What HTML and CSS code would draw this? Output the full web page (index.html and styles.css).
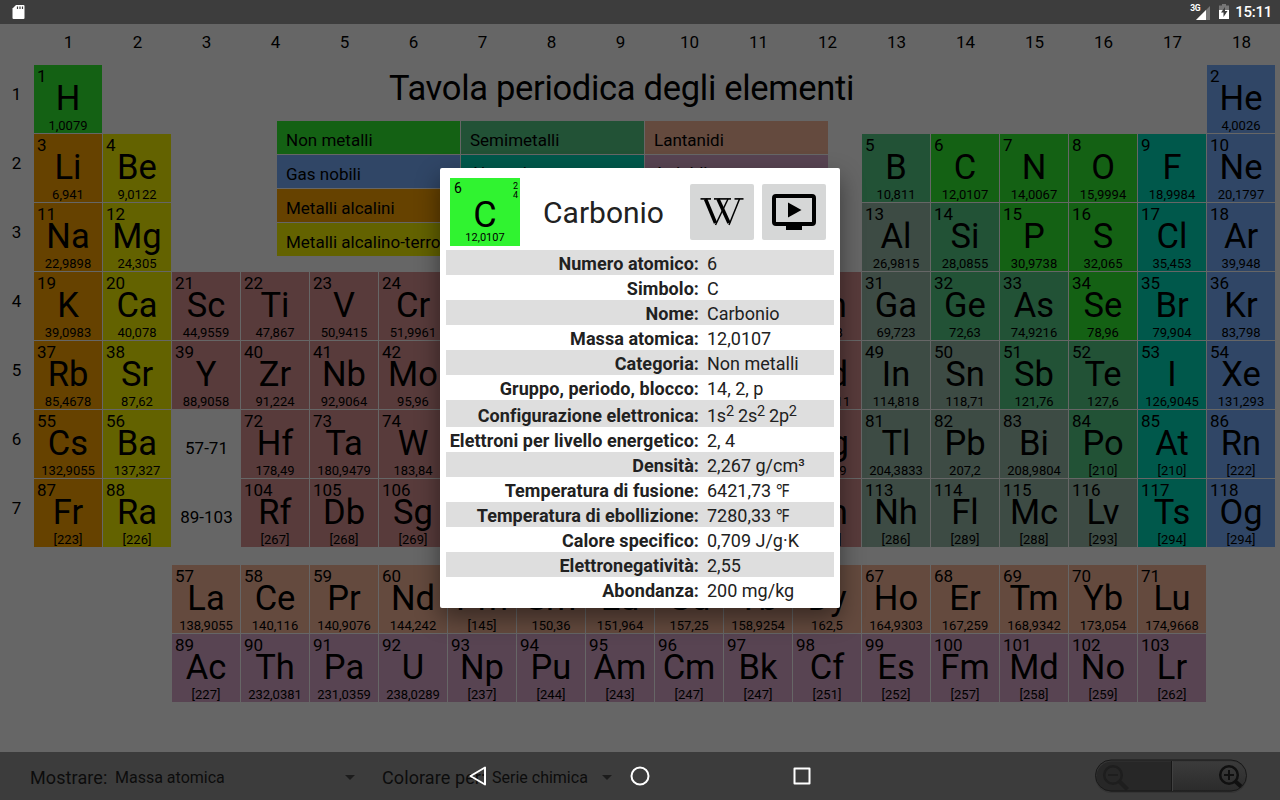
FILE: index.html
```html
<!DOCTYPE html>
<html lang="it">
<head>
<meta charset="utf-8">
<title>Tavola periodica degli elementi</title>
<link rel="stylesheet" href="styles.css">
</head>
<body>
<main class="app">
  <div class="table" id="table">
    <section class="intro">
      <h1 class="title">Tavola periodica degli elementi</h1>
      <div class="legend">
        <div class="nonmetal">Non metalli</div><div class="metalloid">Semimetalli</div><div class="lanthanide">Lantanidi</div>
        <div class="noble">Gas nobili</div><div class="halogen">Alogeni</div><div class="actinide">Attinidi</div>
        <div class="alkali">Metalli alcalini</div><div class="transition">Transizione</div><div></div>
        <div class="alkaline">Metalli alcalino-terrosi</div><div class="post">Post-transizione</div><div></div>
      </div>
    </section>
  </div>
</main>
<div class="scrim"></div>
<header class="status">
  <svg class="sd" width="14" height="16" viewBox="0 0 14 16"><path d="M4 1h7.500q1 0 1 1v12q0 1-1 1h-10q-1 0-1-1V4.500z" fill="#fff"/><path d="M5.500 2.500v2.500M8 2.500v2.500M10.500 2.500v2.500" stroke="#3d3d3d" stroke-width="1.200"/></svg>
  <span class="net">3G</span>
  <svg class="signal" width="14" height="14" viewBox="0 0 14 14"><path d="M14 0v14H0z" fill="#777"/><path d="M10 4v10H0z" fill="#fff"/></svg>
  <svg class="battery" width="10" height="15" viewBox="0 0 10 15"><path d="M3 0h4v1.500h3V15H0V1.500h3z" fill="#777"/><path d="M0 6h10v9H0z" fill="#fff"/><path d="M6 3L2 8.500h2.500V13L8.500 7H6z" fill="#3d3d3d"/></svg>
  <span class="clock">15:11</span>
</header>
<footer class="bar">
  <span class="label">Mostrare:</span><span class="choice first">Massa atomica</span><i class="caret"></i>
  <span class="label second">Colorare per:</span><span class="choice series">Serie chimica</span><i class="caret"></i>
  <svg class="zoom" width="160" height="42" viewBox="0 0 160 42">
    <defs><linearGradient id="plus" x2="0" y2="1"><stop stop-color="#3b3b3b"/><stop offset="1" stop-color="#2b2b2b"/></linearGradient></defs>
    <rect x="4" y="5" width="152" height="33" rx="16.500" fill="#343434"/>
    <path d="M81 6.500H20.500a15 15 0 0 0 0 30H81z" fill="#272727"/>
    <path d="M81 6.500h59a15 15 0 0 1 0 30H81z" fill="url(#plus)"/>
    <rect x="4.500" y="5" width="151" height="31" rx="15.500" fill="none" stroke="#191919"/>
    <path d="M80.500 6v30" stroke="#171717"/><path d="M81.500 6v30" stroke="#404040"/>
    <g fill="none" stroke="#1e1e1e"><circle cx="22" cy="20" r="8.800" stroke-width="2.500"/><path d="M17 20h10" stroke-width="2"/><path d="M28.500 26.500l8 8" stroke-width="4"/></g>
    <g fill="none" stroke="#101010"><circle cx="138" cy="20" r="8.800" stroke-width="2.500"/><path d="M133 20h10M138 15v10" stroke-width="2"/><path d="M144.500 26.500l5.500 5" stroke-width="4"/></g>
  </svg>
</footer>
<nav class="system">
  <svg width="20" height="20" viewBox="0 0 20 20"><path d="M17 1.500v17L2.500 10z"/></svg>
  <svg width="20" height="20" viewBox="0 0 20 20"><circle cx="10" cy="10" r="8.500"/></svg>
  <svg width="20" height="20" viewBox="0 0 20 20"><rect x="2.500" y="2.500" width="15" height="15"/></svg>
</nav>
<section class="dialog">
  <div class="head">
    <div class="card"><span class="no">6</span><span class="shells">2<br>4</span><span class="big">C</span><span class="weight">12,0107</span></div>
    <h2 class="name">Carbonio</h2>
    <div class="button">
      <svg width="44" height="28" viewBox="0 0 44 28" stroke="#000">
        <g stroke-width="3.500"><line x1="5.500" y1="1" x2="15.500" y2="25"/><line x1="18" y1="1" x2="29" y2="25"/></g>
        <g stroke-width="1.500"><line x1="15.500" y1="27" x2="28" y2="1"/><line x1="29" y1="27" x2="39.500" y2="1"/></g>
        <g stroke-width="1.600"><line x1="0.500" y1="0.900" x2="11" y2="0.900"/><line x1="14" y1="0.900" x2="31" y2="0.900"/><line x1="34.500" y1="0.900" x2="43.500" y2="0.900"/></g>
      </svg>
    </div>
    <div class="button"><svg width="44" height="36" viewBox="0 0 44 36"><rect x="2" y="2" width="40" height="28" rx="2" fill="none" stroke="#000" stroke-width="4"/><path d="M14 31h16v5H14z"/><path d="M16 8.500v15L29.500 16z"/></svg></div>
  </div>
  <dl class="facts">
    <div><dt>Numero atomico:</dt><dd>6</dd></div>
    <div><dt>Simbolo:</dt><dd>C</dd></div>
    <div><dt>Nome:</dt><dd>Carbonio</dd></div>
    <div><dt>Massa atomica:</dt><dd>12,0107</dd></div>
    <div><dt>Categoria:</dt><dd>Non metalli</dd></div>
    <div><dt>Gruppo, periodo, blocco:</dt><dd>14, 2, p</dd></div>
    <div class="config"><dt>Configurazione elettronica:</dt><dd>1s<sup>2</sup> 2s<sup>2</sup> 2p<sup>2</sup></dd></div>
    <div><dt>Elettroni per livello energetico:</dt><dd>2, 4</dd></div>
    <div><dt>Densità:</dt><dd>2,267 g/cm³</dd></div>
    <div><dt>Temperatura di fusione:</dt><dd>6421,73 <span class="unit">℉</span></dd></div>
    <div><dt>Temperatura di ebollizione:</dt><dd>7280,33 <span class="unit">℉</span></dd></div>
    <div><dt>Calore specifico:</dt><dd>0,709 J/g·K</dd></div>
    <div><dt>Elettronegatività:</dt><dd>2,55</dd></div>
    <div><dt>Abondanza:</dt><dd>200 mg/kg</dd></div>
  </dl>
</section>
<script src="app.js"></script>
</body>
</html>
```
FILE: styles.css
```css
* { box-sizing: border-box; }
body { margin: 0; width: 1280px; height: 800px; overflow: hidden; background: #fff; color: #000; font-family: Roboto, "Noto Sans", sans-serif; }
h1, h2, dl, dd { margin: 0; font-weight: 400; }
.app { height: 800px; padding-top: 24px; }
.table { display: grid; grid-template-columns: 33px repeat(18, 68px); grid-template-rows: 40px repeat(7, 68px) 16px repeat(2, 68px); gap: 1px; }
.group, .period, .range { display: flex; align-items: center; justify-content: center; font-size: 17px; }
.group { padding: 0 0 5px 1px; }
.period { padding-bottom: 11px; }
.range { padding: 7px 0 0 1px; }
.cell { display: grid; grid-template-rows: 18px 26px 22px; padding: 2px 0 0 3px; height: 68px; white-space: nowrap; }
.cell .number { font-size: 17px; line-height: 18px; }
.cell .symbol { margin-left: -3px; text-align: center; font-size: 34.5px; line-height: 26px; }
.cell .mass { margin-left: -3px; text-align: center; font-size: 13px; line-height: 30px; }
.intro { grid-column: 5 / 14; grid-row: 2 / 5; padding-left: 36px; }
.title { height: 56px; padding-left: 112px; font-size: 34.500px; letter-spacing: -.3px; line-height: 46px; white-space: nowrap; }
.legend { display: grid; grid-template-columns: repeat(3, 183px); grid-auto-rows: 33px; gap: 1px; font-size: 17px; line-height: 38px; white-space: nowrap; }
.legend div { padding-left: 9px; }
.legend .halogen, .legend .actinide { line-height: 36px; }
.nonmetal { background: #32f332; }
.noble { background: #78b0ff; }
.alkali { background: #ffa500; }
.alkaline { background: #f8f500; }
.transition { background: #dd9494; }
.post { background: #99bbaa; }
.metalloid { background: #55cc88; }
.halogen { background: #00ddbb; }
.lanthanide { background: #fbb89c; }
.actinide { background: #ddaacc; }
.scrim { position: absolute; inset: 0; background: rgba(0, 0, 0, .6); }
.status { position: absolute; left: 0; top: 0; width: 1280px; height: 24px; display: flex; align-items: center; background: #3d3d3d; color: #fff; padding: 0 8px 0 12px; }
.net { margin-left: auto; font-size: 8.500px; letter-spacing: -.4px; font-weight: 700; align-self: flex-start; padding-top: 3px; }
.signal { margin: 1px 9px 0 -4px; }
.battery { margin: -2px 6px 0 0; }
.clock { font-size: 15px; font-weight: 500; letter-spacing: -.25px; }
.bar { position: absolute; left: 0; top: 752px; width: 1280px; height: 48px; display: flex; align-items: center; background: #3c3c3c; color: #0c0c0c; padding: 2px 29px 0 30px; white-space: nowrap; }
.label { font-size: 18px; width: 85px; letter-spacing: .1px; }
.choice { font-size: 16px; padding-top: 1px; }
.first { width: 230px; }
.caret { border: 5px solid transparent; border-top-color: #1c1c1c; border-bottom: 0; }
.second { margin-left: 27px; width: 110px; }
.series { width: 110px; }
.zoom { margin: -3px 0 0 auto; }
.system { position: absolute; left: 468px; top: 766px; width: 344px; display: flex; justify-content: space-between; }
.system svg { fill: none; stroke: #fff; stroke-width: 2; stroke-linejoin: round; }
.dialog { position: absolute; left: 440px; top: 168px; width: 400px; height: 440px; background: #fff; border-radius: 2px; padding: 10px 6px 6px; color: #212121; box-shadow: 0 10px 24px rgba(0, 0, 0, .45); }
.head { display: flex; height: 72px; padding: 0 8px 0 4px; gap: 8px; }
.card { display: grid; grid-template-columns: 1fr 1fr; grid-template-rows: 20px 30px 18px; width: 70px; height: 68px; background: #30f330; color: #000; }
.no { font-size: 14px; line-height: 21px; padding-left: 4px; }
.shells { font-size: 9px; line-height: 9px; text-align: right; padding: 4px 2px 0 0; }
.big { grid-column: 1 / 3; text-align: center; font-size: 36px; line-height: 34px; }
.weight { grid-column: 1 / 3; text-align: center; font-size: 11px; line-height: 20px; }
.name { flex: 1; text-align: center; font-size: 30px; line-height: 70px; padding-right: 3px; }
.button { width: 64px; height: 56px; margin-top: 6px; background: #d6d7d7; border-radius: 2px; display: flex; align-items: center; justify-content: center; }
.facts { font-size: 18px; white-space: nowrap; }
.facts > div { display: grid; grid-template-columns: 253px 1fr; column-gap: 8px; height: 25px; line-height: 27px; }
.facts > div:nth-child(odd) { background: #dedede; }
.facts dt { font-weight: 700; justify-self: end; letter-spacing: .06px; }
.facts .config { height: 27px; line-height: 31px; }
.config dd { letter-spacing: -.25px; }
.config sup { font-size: 14.5px; line-height: 0; vertical-align: 6px; }
.unit { display: inline-block; transform: scaleX(.85); transform-origin: left; }
```
FILE: app.js
```javascript
// Each entry: first atomic number, grid row, first grid column, then "symbol mass category".
const runs = [
  [1, 2, 2, "H 1,0079 n"], [2, 2, 19, "He 4,0026 g"],
  [3, 3, 2, "Li 6,941 a|Be 9,0122 e"],
  [5, 3, 14, "B 10,811 m|C 12,0107 n|N 14,0067 n|O 15,9994 n|F 18,9984 h|Ne 20,1797 g"],
  [11, 4, 2, "Na 22,9898 a|Mg 24,305 e"],
  [13, 4, 14, "Al 26,9815 p|Si 28,0855 m|P 30,9738 n|S 32,065 n|Cl 35,453 h|Ar 39,948 g"],
  [19, 5, 2, "K 39,0983 a|Ca 40,078 e|Sc 44,9559 t|Ti 47,867 t|V 50,9415 t|Cr 51,9961 t|Mn 54,938 t|Fe 55,845 t|Co 58,9332 t|Ni 58,6934 t|Cu 63,546 t|Zn 65,38 t|Ga 69,723 p|Ge 72,63 m|As 74,9216 m|Se 78,96 n|Br 79,904 h|Kr 83,798 g"],
  [37, 6, 2, "Rb 85,4678 a|Sr 87,62 e|Y 88,9058 t|Zr 91,224 t|Nb 92,9064 t|Mo 95,96 t|Tc [98] t|Ru 101,07 t|Rh 102,9055 t|Pd 106,42 t|Ag 107,8682 t|Cd 112,411 t|In 114,818 p|Sn 118,71 p|Sb 121,76 m|Te 127,6 m|I 126,9045 h|Xe 131,293 g"],
  [55, 7, 2, "Cs 132,9055 a|Ba 137,327 e"],
  [72, 7, 5, "Hf 178,49 t|Ta 180,9479 t|W 183,84 t|Re 186,207 t|Os 190,23 t|Ir 192,217 t|Pt 195,084 t|Au 196,9666 t|Hg 200,59 t|Tl 204,3833 p|Pb 207,2 p|Bi 208,9804 p|Po [210] m|At [210] h|Rn [222] g"],
  [87, 8, 2, "Fr [223] a|Ra [226] e"],
  [104, 8, 5, "Rf [267] t|Db [268] t|Sg [269] t|Bh [270] t|Hs [269] t|Mt [278] t|Ds [281] t|Rg [281] t|Cn [285] t|Nh [286] p|Fl [289] p|Mc [288] p|Lv [293] p|Ts [294] h|Og [294] g"],
  [57, 10, 4, "La 138,9055 l|Ce 140,116 l|Pr 140,9076 l|Nd 144,242 l|Pm [145] l|Sm 150,36 l|Eu 151,964 l|Gd 157,25 l|Tb 158,9254 l|Dy 162,5 l|Ho 164,9303 l|Er 167,259 l|Tm 168,9342 l|Yb 173,054 l|Lu 174,9668 l"],
  [89, 11, 4, "Ac [227] c|Th 232,0381 c|Pa 231,0359 c|U 238,0289 c|Np [237] c|Pu [244] c|Am [243] c|Cm [247] c|Bk [247] c|Cf [251] c|Es [252] c|Fm [257] c|Md [258] c|No [259] c|Lr [262] c"]
];
const categories = { n: "nonmetal", g: "noble", a: "alkali", e: "alkaline", t: "transition", p: "post", m: "metalloid", h: "halogen", l: "lanthanide", c: "actinide" };
const table = document.getElementById("table");

function place(className, row, column, html) {
  const node = document.createElement("div");
  node.className = className;
  node.style.gridArea = row + " / " + column;
  node.innerHTML = html;
  table.append(node);
}

for (let group = 1; group <= 18; group++) place("group", 1, group + 1, group);
for (let period = 1; period <= 7; period++) place("period", period + 1, 1, period);
place("range", 7, 4, "57-71");
place("range", 8, 4, "89-103");
for (const [first, row, column, list] of runs) {
  list.split("|").forEach((entry, i) => {
    const [symbol, mass, kind] = entry.split(" ");
    place("cell " + categories[kind], row, column + i,
      `<span class="number">${first + i}</span><span class="symbol">${symbol}</span><span class="mass">${mass}</span>`);
  });
}
```
